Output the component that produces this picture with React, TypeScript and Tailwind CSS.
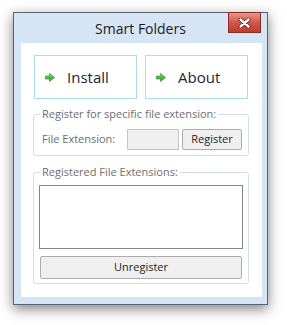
import React from "react";

/* Green "go" arrow used on the two big command buttons */
function GoArrow() {
  return (
    <svg width="10" height="9" viewBox="0 0 10 9" aria-hidden="true">
      <defs>
        <linearGradient id="g" x1="0" y1="0" x2="0" y2="1">
          <stop offset="0" stopColor="#7ddc68" />
          <stop offset="1" stopColor="#1f9a2a" />
        </linearGradient>
      </defs>
      <path d="M0.5 3 H4.5 V0.4 L9.6 4.5 L4.5 8.6 V6 H0.5 Z" fill="url(#g)" stroke="#2b8f2b" strokeWidth="0.6" strokeLinejoin="round" />
    </svg>
  );
}

function CloseGlyph() {
  return (
    <svg width="13" height="10" viewBox="0 0 13 10" aria-hidden="true">
      <path d="M2.5 1.5 L10.5 8.5 M10.5 1.5 L2.5 8.5" stroke="#5a1a14" strokeWidth="4" strokeLinecap="round" />
      <path d="M2.5 1.5 L10.5 8.5 M10.5 1.5 L2.5 8.5" stroke="#ffffff" strokeWidth="2.4" strokeLinecap="round" />
    </svg>
  );
}

function BigButton({ label }: { label: string }) {
  return (
    <button
      type="button"
      className="flex h-[44px] w-[103px] items-center gap-[12px] border border-[#aadcea] bg-white pl-[10px] text-[15px] text-[#1b2340]"
    >
      <GoArrow />
      {label}
    </button>
  );
}

export default function App() {
  return (
    <div
      className="h-[325px] w-[287px] bg-white pl-[13px] pt-[12px]"
      style={{ fontFamily: '"Open Sans", "Noto Sans", sans-serif' }}
    >
      {/* ── Window frame ─────────────────────────────────────────── */}
      <div className="flex h-[293px] w-[255px] flex-col border border-[#58636e] bg-[#d6e5f5] shadow-[0_4px_12px_rgba(0,0,0,0.5)]">
        {/* Title bar */}
        <div className="relative flex h-[30px] shrink-0 items-center justify-center text-[14px] text-[#1a1a1a]">
          Smart Folders
          <button
            type="button"
            aria-label="Close"
            className="absolute right-[6px] top-[-1px] flex h-[21px] w-[33px] items-center justify-center border border-[#8d2b23] bg-gradient-to-b from-[#e6968c] via-[#d0574c] to-[#bf3a2f]"
          >
            <CloseGlyph />
          </button>
        </div>

        {/* Client area */}
        <div className="ml-[7px] mr-[5px] h-[254px] bg-white pl-[12px] pr-[13px] pt-[12px] text-[11px]">
          <div className="flex gap-[8px] pl-[1px]">
            <BigButton label="Install" />
            <BigButton label="About" />
          </div>

          <fieldset className="mt-[7px] rounded-[3px] border border-[#d5dde3] pb-[5px] pl-[8px] pr-[6px]">
            <legend className="-ml-[2px] px-[2px] leading-[16px] text-[#6e6e6e]">
              Register for specific file extension:
            </legend>
            <div className="mt-[7px] flex h-[21px] items-center">
              <span className="w-[85px] text-[#6e6e6e]">File Extension:</span>
              <div className="h-[21px] w-[52px] border border-[#c4c4c4] bg-[#efefef]" />
              <button
                type="button"
                className="ml-[3px] h-[21px] w-[60px] rounded-[2px] border border-[#acacac] bg-[#efefef] text-[#1e1e1e]"
              >
                Register
              </button>
            </div>
          </fieldset>

          <fieldset className="mt-[8px] rounded-[3px] border border-[#d5dde3] pb-[4px] pl-[5px] pr-[5px]">
            <legend className="ml-[1px] px-[2px] leading-[16px] text-[#6e6e6e]">
              Registered File Extensions:
            </legend>
            <div className="mt-[5px] h-[64px] w-[204px] border border-[#828790] bg-white" />
            <button
              type="button"
              className="ml-[1px] mt-[7px] h-[23px] w-[202px] rounded-[2px] border border-[#acacac] bg-[#efefef] text-[#1e1e1e]"
            >
              Unregister
            </button>
          </fieldset>
        </div>
      </div>
    </div>
  );
}
